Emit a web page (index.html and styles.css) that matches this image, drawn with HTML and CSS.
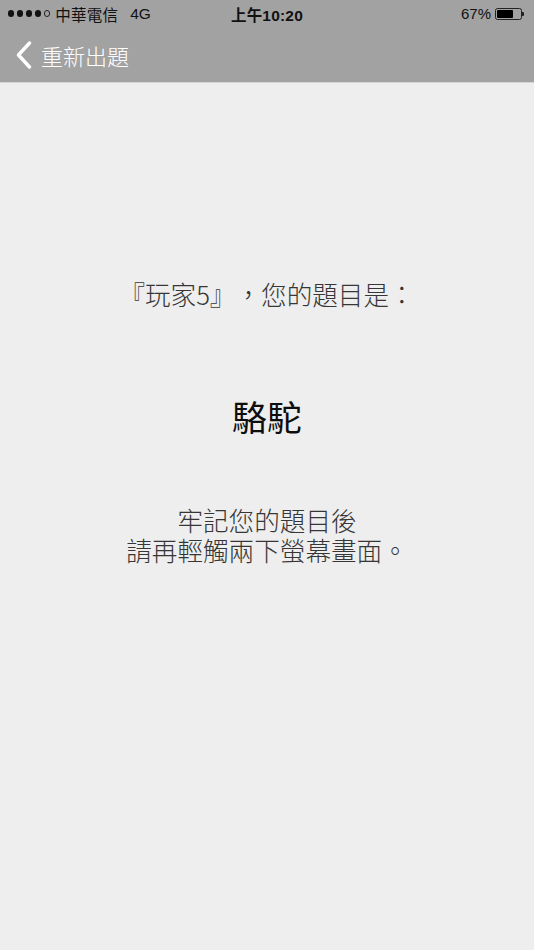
FILE: index.html
```html
<!DOCTYPE html>
<html lang="zh-Hant">
<head>
<meta charset="utf-8">
<title>重新出題</title>
<link rel="stylesheet" href="styles.css">
</head>
<body>
<div class="screen">
  <header class="topbar">
    <div class="status">
      <div class="status-left">
        <span class="signal"><i class="dot"></i><i class="dot"></i><i class="dot"></i><i class="dot"></i><i class="dot empty"></i></span>
        <span class="carrier">中華電信</span>
        <span class="net">4G</span>
      </div>
      <div class="status-time">上午10:20</div>
      <div class="status-right">
        <span class="pct">67%</span>
        <span class="battery"><span class="battery-fill"></span></span>
        <span class="battery-nub"></span>
      </div>
    </div>
    <nav class="navbar">
      <svg class="chev" width="18" height="28" viewBox="0 0 18 28"><path d="M14.5 2 L3.5 14 L14.5 26" fill="none" stroke="#fff" stroke-width="3.4" stroke-linecap="round" stroke-linejoin="round"/></svg>
      <span class="nav-title">重新出題</span>
    </nav>
  </header>
  <main class="content">
    <p class="prompt">『玩家5』，您的題目是：</p>
    <p class="word">駱駝</p>
    <div class="hint">
      <div class="hint-line">牢記您的題目後</div>
      <div class="hint-line">請再輕觸兩下螢幕畫面。</div>
    </div>
  </main>
</div>
</body>
</html>
```

FILE: styles.css
```css
* { box-sizing: border-box; }
html, body { margin: 0; padding: 0; }
body {
  width: 534px;
  height: 950px;
  background: #eeeeee;
  font-family: "Noto Sans CJK TC", "Noto Sans", sans-serif;
  overflow: hidden;
  text-spacing-trim: space-all;
}
.screen { display: flex; flex-direction: column; height: 950px; }
.topbar {
  background: #a2a2a2;
  border-bottom: 1px solid #d6d6d6;
}
.status {
  height: 27px;
  display: flex;
  align-items: center;
  justify-content: space-between;
  padding: 0 10px 0 8px;
  font-family: "Liberation Sans", "Noto Sans CJK TC", sans-serif;
  font-size: 15px;
  color: #111;
  position: relative;
}
.status-left { display: flex; align-items: center; }
.signal { display: flex; gap: 2.6px; margin-right: 5px; }
.dot { display: block; width: 6.4px; height: 6.4px; border-radius: 50%; background: #111; }
.dot.empty { background: transparent; border: 1px solid #222; }
.carrier { font-family: "Noto Sans CJK TC", sans-serif; font-size: 15.5px; letter-spacing: 0.2px; }
.net { margin-left: 12px; font-size: 15.5px; }
.status-time {
  position: absolute;
  left: 0; right: 0;
  text-align: center;
  font-weight: bold;
  font-size: 15.5px;
  letter-spacing: 0.2px;
  pointer-events: none;
}
.status-right { display: flex; align-items: center; }
.pct { margin-right: 4px; }
.battery {
  width: 27px; height: 12px;
  border: 1px solid #222;
  border-radius: 2.5px;
  padding: 1px;
  display: flex;
}
.battery-fill { width: 68%; background: #000; border-radius: 1px; }
.battery-nub { width: 2px; height: 4px; background: #222; border-radius: 0 1px 1px 0; }
.navbar {
  height: 55px;
  display: flex;
  align-items: center;
  padding-left: 15px;
}
.chev { display: block; margin-right: 8px; margin-top: 1px; }
.nav-title { color: #fff; font-size: 22px; font-weight: 300; }
.content {
  flex: 1;
  display: flex;
  flex-direction: column;
  align-items: center;
  text-align: center;
}
.content p { margin: 0; }
.prompt {
  margin-top: 196px !important;
  font-size: 25.6px;
  line-height: 30px;
  color: #363636;
  font-weight: 300;
}
.word {
  margin-top: 86px !important;
  font-size: 35px;
  line-height: 42px;
  color: #0e0e0e;
  font-weight: 400;
}
.hint {
  margin-top: 68px;
  font-size: 25.6px;
  color: #363636;
  font-weight: 300;
  display: flex;
  flex-direction: column;
  align-items: center;
}
.hint-line { line-height: 30px; height: 30px; }
```
